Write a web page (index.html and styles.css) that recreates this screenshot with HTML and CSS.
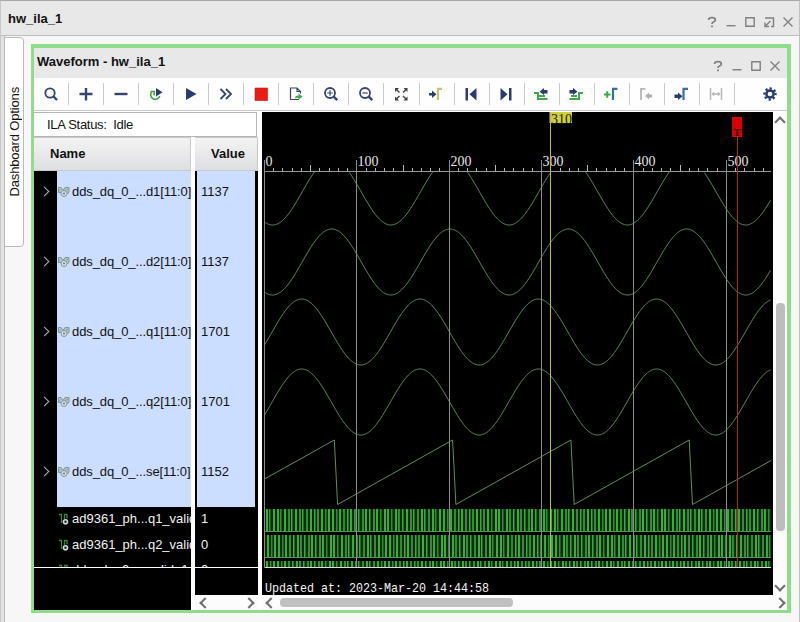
FILE: index.html
```html
<!DOCTYPE html>
<html lang="en">
<head>
  <meta charset="UTF-8" />
  <title>hw_ila_1</title>
  <link rel="stylesheet" href="styles.css">
</head>
<body>

  <svg width="0" height="0" class="defs">
    <symbol id="bus" viewBox="0 0 12 12">
      <path d="M.5 1.5h2.500l2 3 2-3h4v4.500l-1.500 2M.5 1.500v5h3" fill="#aebfc4" stroke="#8295a0"/>
      <path d="M1 4h2.500M8.500 3.500h2" stroke="#7fae8c" fill="none"/>
      <circle cx="6" cy="7.500" r="3" fill="#d5e0e6" stroke="#8295a0"/>
      <circle cx="6" cy="7.500" r="1" fill="#61737e"/>
    </symbol>
    <symbol id="bit" viewBox="0 0 12 12">
      <path d="M1 1.500h2.500v8.500M6.500 6V1.500h2.500v4" fill="none" stroke="#3d8048" stroke-width="1.300"/>
      <circle cx="7.500" cy="8.800" r="2" fill="#222" stroke="#d5dbe0" stroke-width="1.600"/>
    </symbol>
    <symbol id="max" viewBox="0 0 12 12"><path d="M1.800 1.800h8.400v8.400h-8.400z"/></symbol>
    <symbol id="min" viewBox="0 0 12 12"><path d="M1.500 9.700h9"/></symbol>
    <symbol id="close" viewBox="0 0 12 12"><path d="M1.500 1.500l9 9M10.500 1.500l-9 9"/></symbol>
    <symbol id="float" viewBox="0 0 12 12"><path d="M2 2h8.500v8.500H8M2 6.500v4h4M2.500 10l5-5"/></symbol>
    <symbol id="help" viewBox="0 0 12 12"><path d="M2.500 3.800Q2.700 1.700 6 1.700Q9.300 1.700 9.300 4Q9.300 5.400 7.500 6Q6 6.500 6 8M6 9.500v1.700" stroke-width="1.800"/></symbol>
  </svg>

  <div class="window">
    <div class="titlebar">
      <span>hw_ila_1</span>
      <div class="win-buttons">
        <svg><use href="#help"/></svg>
        <svg><use href="#min"/></svg>
        <svg><use href="#max"/></svg>
        <svg><use href="#float"/></svg>
        <svg><use href="#close"/></svg>
      </div>
    </div>

    <div class="workspace">
      <div class="side-tab"><span>Dashboard Options</span></div>

      <div class="panel">
        <div class="panel-title">
          <span>Waveform - hw_ila_1</span>
          <div class="win-buttons">
            <svg><use href="#help"/></svg>
            <svg><use href="#min"/></svg>
            <svg><use href="#max"/></svg>
            <svg><use href="#close"/></svg>
          </div>
        </div>

        <div class="toolbar">
          <div class="tool"><svg viewBox="0 0 16 16"><circle cx="7" cy="7" r="4.700" class="line"/><path d="M10.500 10.500l3.500 3.500" class="line thick"/></svg></div>
          <div class="tool"><svg viewBox="0 0 16 16"><path d="M8 2v12.500M1.500 8h13" class="line thick"/></svg></div>
          <div class="tool"><svg viewBox="0 0 16 16"><path d="M1.500 8h13" class="line thick"/></svg></div>
          <div class="tool"><svg viewBox="0 0 16 16"><path d="M4 5.500A4.600 4.600 0 1 0 11.700 10M2.500 5.500h3.700v4" class="green"/><path d="M8 2l6.500 4.200L8 10.500z" class="fill"/></svg></div>
          <div class="tool"><svg viewBox="0 0 16 16"><path d="M3 2l10.500 6L3 14z" class="fill"/></svg></div>
          <div class="tool"><svg viewBox="0 0 16 16"><path d="M2.500 3l5 5-5 5M8 3l5 5-5 5" class="line"/></svg></div>
          <div class="tool"><svg viewBox="0 0 16 16"><path d="M2 2h12.500v12.500H2z" fill="#ec1b15" stroke="#c71812" stroke-width=".6"/></svg></div>
          <div class="tool"><svg viewBox="0 0 16 16"><path d="M11 13.500H2.500V2h6.500l3.500 3.500v2M9 2v3.500h3.500" class="line thin"/><path d="M7 12.500c0-2 1-3 3.500-3V7.500l4 3.300-4 3v-2c-2 0-3 .2-3.500.7z" fill="#43a64b"/></svg></div>
          <div class="tool"><svg viewBox="0 0 16 16"><circle cx="7" cy="7" r="5" class="line"/><path d="M4.300 7h5.400M7 4.300v5.400" class="line thin"/><path d="M10.700 10.700l3.500 3.500" class="line thick"/></svg></div>
          <div class="tool"><svg viewBox="0 0 16 16"><circle cx="7" cy="7" r="5" class="line"/><path d="M4.300 7h5.400" class="line thin"/><path d="M10.700 10.700l3.500 3.500" class="line thick"/></svg></div>
          <div class="tool"><svg viewBox="0 0 16 16"><path d="M2 6V2h4zM10.500 2h4v4zM2 10.500v4h4zM14.500 10.500v4h-4z" class="fill dark"/><path d="M3 3l3.500 3.500M13.500 3L10 6.500M3 13.500L6.500 10M13.500 13.500L10 10" class="line dark"/></svg></div>
          <div class="tool"><svg viewBox="0 0 16 16"><path d="M1 7h3V4.500l4.500 3.700L4 12V9.500H1z" class="fill"/><path d="M10 14V2.800h4" class="olive"/></svg></div>
          <div class="tool"><svg viewBox="0 0 16 16"><path d="M2.500 2h2.500v12.500H2.500zM13.500 2v12.500L6.500 8.200z" class="fill"/></svg></div>
          <div class="tool"><svg viewBox="0 0 16 16"><path d="M11 2h2.500v12.500H11zM2.500 2v12.500l7-6.300z" class="fill"/></svg></div>
          <div class="tool"><svg viewBox="0 0 16 16"><path d="M1 7h4v6h9.500M6 10h6" class="green thick"/><path d="M14.500 4v3.500H11V9L6.500 5.700 11 2v2z" class="fill"/></svg></div>
          <div class="tool"><svg viewBox="0 0 16 16"><path d="M15 7h-4v6H1.500M3 10h6" class="green thick"/><path d="M1.500 4v3.500H5V9l4.500-3.300L5 2v2z" class="fill"/></svg></div>
          <div class="tool"><svg viewBox="0 0 16 16"><path d="M1 8.500h6.500M4.200 5.200v6.500" class="green thick"/><path d="M10 14V2.800h4.500" class="blue"/></svg></div>
          <div class="tool"><svg viewBox="0 0 16 16"><path d="M3 14V2.800h4.500" class="line grey"/><path d="M14 8.500v3h-3v2L7 10l4-3.500v2z" class="fill grey"/></svg></div>
          <div class="tool"><svg viewBox="0 0 16 16"><path d="M1.500 8.500v3.500H5v2L9.500 10.300 5 6.500v2z" class="fill"/><path d="M10.500 14V2.800H15" class="blue"/></svg></div>
          <div class="tool"><svg viewBox="0 0 16 16"><path d="M2.500 2v12M13.500 2v12M4 8h8M6 6.500L4.500 8 6 9.500M10 6.500L11.500 8 10 9.500" class="line mid grey"/></svg></div>
          <div class="settings"><svg viewBox="0 0 16 16"><circle cx="8" cy="8" r="3.600" fill="none" stroke="#2a3b6e" stroke-width="2.500"/><circle cx="8" cy="8" r="5.600" fill="none" stroke="#2a3b6e" stroke-width="2.200" stroke-dasharray="2.200 2.198" transform="rotate(-11 8 8)"/></svg></div>
        </div>

        <div class="content">
          <div class="signals">
            <div class="status">ILA Status:&nbsp; Idle</div>
            <div class="columns">
              <div class="names">
                <div class="col-head">Name</div>
                <div class="list">
                  <div class="bus-row"><i class="arrow"></i><svg><use href="#bus"/></svg><span>dds_dq_0_...d1[11:0]</span></div>
                  <div class="bus-row"><i class="arrow"></i><svg><use href="#bus"/></svg><span>dds_dq_0_...d2[11:0]</span></div>
                  <div class="bus-row"><i class="arrow"></i><svg><use href="#bus"/></svg><span>dds_dq_0_...q1[11:0]</span></div>
                  <div class="bus-row"><i class="arrow"></i><svg><use href="#bus"/></svg><span>dds_dq_0_...q2[11:0]</span></div>
                  <div class="bus-row"><i class="arrow"></i><svg><use href="#bus"/></svg><span>dds_dq_0_...se[11:0]</span></div>
                  <div class="bit-row"><svg><use href="#bit"/></svg><span>ad9361_ph...q1_valid</span></div>
                  <div class="bit-row"><svg><use href="#bit"/></svg><span>ad9361_ph...q2_valid</span></div>
                  <div class="bit-row cut"><svg><use href="#bit"/></svg><span>dds_dq_0_...valid_1</span></div>
                </div>
              </div>
              <div class="values">
                <div class="col-head">Value</div>
                <div class="list">
                  <div class="bus-row">1137</div>
                  <div class="bus-row">1137</div>
                  <div class="bus-row">1701</div>
                  <div class="bus-row">1701</div>
                  <div class="bus-row">1152</div>
                  <div class="bit-row">1</div>
                  <div class="bit-row">0</div>
                  <div class="bit-row cut">0</div>
                </div>
                <div class="hscroll"><i class="chev left"></i><i class="chev right"></i></div>
              </div>
            </div>
          </div>

          <div class="wave-area">
            <div class="wave-top">
              <svg id="wave" width="511" height="483" viewBox="262 112 511 483"></svg>
              <div class="vscroll"><i class="chev up"></i><div class="vthumb"></div><i class="chev down"></i></div>
            </div>
            <div class="hscroll"><i class="chev left"></i><div class="hthumb"></div><i class="chev right"></i></div>
          </div>
        </div>
      </div>
    </div>
  </div>

  <script src="wave.js"></script>
</body>
</html>
```
FILE: styles.css
```css
* {
  box-sizing: border-box;
}

body {
  margin: 0;
  width: 800px;
  height: 622px;
  overflow: hidden;
  font-family: "Liberation Sans", Arial, sans-serif;
  font-size: 13px;
  color: #111;
  background: #f7f7f7;
}

.defs {
  display: block;
}

.window {
  height: 622px;
  border-top: 1px solid #a8a8a8;
  border-left: 1px solid #c8c8c8;
  border-right: 1px solid #c0c0c0;
  display: flex;
  flex-direction: column;
}

.titlebar {
  height: 35px;
  flex: none;
  background: #e8e8e8;
  border-bottom: 1px solid #bdbdbd;
  display: flex;
  align-items: center;
  justify-content: space-between;
  padding: 1px 5px 0 7px;
  font-weight: bold;
}

.win-buttons {
  display: flex;
  gap: 7px;
  padding-top: 6px;
}

.win-buttons svg {
  width: 12px;
  height: 12px;
  fill: none;
  stroke: #808080;
  stroke-width: 1.4;
}

.workspace {
  flex: 1;
  display: flex;
  align-items: flex-start;
  padding-left: 3px;
  background: linear-gradient(to right, #e3e3e3 3px, #b9b9b9 3px, #b9b9b9 4px, #f7f7f7 4px);
}

.side-tab {
  width: 20px;
  height: 210px;
  margin-top: 1px;
  padding-bottom: 1px;
  background: #fff;
  border: 1px solid #b9b9b9;
  border-radius: 0 4px 4px 0;
  display: flex;
  justify-content: center;
  align-items: center;
}

.side-tab span {
  writing-mode: vertical-rl;
  transform: rotate(180deg);
  white-space: nowrap;
  letter-spacing: -0.15px;
}

.panel {
  width: 760px;
  height: 569px;
  margin: 8px 0 0 7px;
  border: 3px solid #8fdc8c;
  border-top-width: 4px;
  border-right-width: 4px;
  background: #fff;
}

.panel-title {
  height: 30px;
  background: #e8e8e8;
  display: flex;
  align-items: center;
  justify-content: space-between;
  padding: 0 6px 3px 3px;
  font-weight: bold;
}

.panel-title .win-buttons {
  padding-top: 8px;
}

.toolbar {
  height: 33px;
  background: #fefefe;
  border-bottom: 1px solid #c8c8c8;
  display: flex;
  align-items: center;
}

.tool {
  width: 35.05px;
  height: 22px;
  border-right: 1px solid #c9c9c9;
  display: flex;
  align-items: center;
  justify-content: center;
}

.tool svg {
  width: 16px;
  height: 16px;
  margin-left: -1px;
}

.settings {
  margin-left: auto;
  margin-right: 9px;
  height: 16px;
}

.settings svg {
  width: 16px;
  height: 16px;
}

.fill { fill: #2a3b6e; }
.line { fill: none; stroke: #34456f; stroke-width: 1.8; }
.thick { stroke-width: 2.4; }
.thin { stroke-width: 1.2; }
.mid { stroke-width: 1.5; }
.green { fill: none; stroke: #43a64b; stroke-width: 1.6; }
.green.thick { stroke-width: 2; }
.olive { fill: none; stroke: #c4c46a; stroke-width: 2.2; }
.blue { fill: none; stroke: #34739a; stroke-width: 2.2; }
.fill.dark { fill: #3b4046; }
.line.dark { stroke: #3b4046; stroke-width: 1.4; }
.fill.grey { fill: #b0b0b0; }
.line.grey { stroke: #b8b8b8; }

.content {
  display: flex;
  height: 499px;
  padding-top: 1px;
}

.signals {
  width: 224px;
  display: flex;
  flex-direction: column;
}

.status {
  width: 223px;
  height: 25px;
  border: 1px solid #b5b5b5;
  border-left: 0;
  padding: 4px 0 0 13px;
  letter-spacing: -0.3px;
}

.columns {
  flex: 1;
  display: flex;
  gap: 4px;
}

.names {
  width: 157px;
  background: #000;
}

.values {
  width: 63px;
  display: flex;
  flex-direction: column;
}

.col-head {
  height: 34px;
  flex: none;
  background: linear-gradient(#f3f3f3, #dedfe1);
  border: 1px solid #c9c9c9;
  border-left: 0;
  font-weight: bold;
  padding: 8px 0 0 16px;
}

.list {
  height: 397px;
  background: #000;
  overflow: hidden;
  border-bottom: 1px solid #fff;
}

.values .list {
  height: 424px;
  background: linear-gradient(#000 396px, #fff 396px, #fff 397px, #000 397px);
  border-bottom: 0;
}

.names .bus-row {
  height: 70px;
  display: flex;
  padding-top: 13px;
  background: linear-gradient(to right, #000 23px, #ccdeff 23px);
  white-space: nowrap;
  letter-spacing: -0.1px;
}

.names .bus-row:nth-child(5) {
  height: 56px;
}

.names .arrow {
  width: 7px;
  height: 7px;
  flex: none;
  margin: 4px 0 0 7px;
  border: solid #b5b5b5;
  border-width: 1.5px 1.5px 0 0;
  transform: rotate(45deg);
}

.names svg {
  width: 12px;
  height: 12px;
  margin: 2px 2px 0 10px;
  flex: none;
}

.names .bit-row {
  display: flex;
  white-space: nowrap;
  overflow: hidden;
}

.names .bit-row svg {
  margin-left: 24px;
}

.bit-row {
  height: 26px;
  padding-top: 4px;
  color: #f2f2f2;
}

.bit-row.cut {
  padding-top: 3px;
}

.values .bus-row {
  height: 70px;
  margin: 0 3px 0 2px;
  padding: 13px 0 0 4px;
  background: #ccdeff;
}

.values .bus-row:nth-child(5) {
  height: 56px;
}

.values .bit-row {
  padding-left: 6px;
}

.values .bit-row.cut {
  height: 8px;
  overflow: hidden;
}

.hscroll {
  height: 15px;
  display: flex;
  align-items: center;
  justify-content: space-between;
  background: #fcfcfc;
  padding: 0 5px 0 6px;
}

.chev {
  width: 8px;
  height: 8px;
  flex: none;
  border: solid #6f6f6f;
  border-width: 2px 2px 0 0;
}

.chev.right { transform: rotate(45deg); }
.chev.left { transform: rotate(-135deg); }
.chev.up { transform: rotate(-45deg); }
.chev.down { transform: rotate(135deg); }

.wave-area {
  margin-left: 4px;
  width: 525px;
}

.wave-top {
  display: flex;
  height: 483px;
}

#wave {
  background: #000;
  flex: none;
}

.vscroll {
  flex: 1;
  background: #fcfcfc;
  display: flex;
  flex-direction: column;
  align-items: center;
  padding: 6px 0 5px;
}

.vthumb {
  width: 9px;
  height: 228px;
  margin: 177px 0 auto;
  border-radius: 4px;
  background: #bdbdbd;
}

.wave-area .hscroll {
  padding: 0 3px 0 5px;
}

.hthumb {
  width: 233px;
  height: 9px;
  margin: 0 auto 0 5px;
  border-radius: 4px;
  background: #c1c1c1;
}

.tick-label {
  font: 14px "Liberation Serif", serif;
  fill: #e4e4e4;
}

.cursor-label {
  font: 14px "Liberation Serif", serif;
  fill: #222;
}

.trigger-label {
  font: bold 11px "Liberation Serif", serif;
  fill: #2a0000;
}

.updated {
  font: 13px "Liberation Mono", monospace;
  fill: #f4f4f4;
}
```
FILE: wave.js
```javascript
const svg = document.getElementById("wave");
const X0 = 264.5;
const X1 = 771;
const STEP = 0.9236; // pixels per sample
const PERIOD = 118.3;

function add(tag, attrs, text) {
  const el = document.createElementNS("http://www.w3.org/2000/svg", tag);
  for (const key in attrs) el.setAttribute(key, attrs[key]);
  if (text) el.textContent = text;
  svg.appendChild(el);
  return el;
}

function line(x1, y1, x2, y2, stroke) {
  add("line", { x1, y1, x2, y2, stroke, "stroke-width": 1 });
}

function path(d) {
  add("path", { d, fill: "none", stroke: "#6a9c6a", "stroke-width": 0.9 });
}

// valid strobes, one pulse every four samples
function pulses(top, bottom, shift) {
  const colors = ["#38ac38", "#2b8f2b", "#4fa04f", "#38ac38", "#4c7d4c"];
  add("rect", { x: X0, y: top, width: X1 - X0, height: bottom - top, fill: "#032d03" });
  let i = 0;
  for (let x = X0 + shift; x < X1 - 1; x += STEP * 4) {
    add("rect", { x: Math.round(x), y: top, width: i % 3 === 1 ? 1.5 : 2, height: bottom - top, fill: colors[i % 5] });
    i++;
  }
}

pulses(509, 531, 1);
pulses(535, 557, 2.5);
pulses(561, 567, 1.5);
line(X0, 531.5, X1, 531.5, "#4f9c4f");
line(X0, 557.5, X1, 557.5, "#4f9c4f");

// grid and ruler
for (let n = 0; n <= 540; n += 10) {
  const x = Math.floor(X0 + n * STEP) + 0.5;
  if (n % 100 === 0) {
    line(x, 160, x, 567, "#8c8c8c");
    add("text", { x: x + 1, y: 166, class: "tick-label" }, String(n));
  } else {
    line(x, n % 50 === 0 ? 165 : 168, x, 171, "#b5b5b5");
  }
}
line(X0, 171.5, X1, 171.5, "#999");

// analog sine rows
function sine(mid, peak) {
  let d = "";
  for (let x = X0; x <= X1; x += 1) {
    const y = mid - 33 * Math.cos((x - peak) * 2 * Math.PI / PERIOD);
    if (y < 171.5) { d += " "; continue; }
    d += (d === "" || d.endsWith(" ") ? "M" : "L") + x + "," + y.toFixed(2);
  }
  path(d);
}
sine(192, 331.7);
sine(262, 331.7);
sine(332, 301.7);
sine(402, 301.7);

// phase ramp
let ramp = "M" + X0 + ",479";
for (let x = 334.3; x < X1; x += PERIOD) {
  ramp += "L" + x + ",440L" + (x + 3.3) + ",504.5";
}
path(ramp + "L" + X1 + ",460.5");

line(X0, 567.5, X1, 567.5, "#dcdcdc");

// cursor and trigger markers
add("rect", { x: 549.5, y: 112, width: 22.5, height: 11, fill: "#d0d03a" });
add("text", { x: 551, y: 124, class: "cursor-label" }, "310");
line(550.5, 112, 550.5, 567, "#b9b95c");
add("rect", { x: 732, y: 117, width: 10, height: 20, fill: "#d80000" });
add("text", { x: 733.3, y: 136, class: "trigger-label" }, "T");
line(737.5, 137, 737.5, 567, "#b8222a");

add("text", { x: 265, y: 591.5, class: "updated", textLength: 224, lengthAdjust: "spacingAndGlyphs" }, "Updated at: 2023-Mar-20 14:44:58");
```
